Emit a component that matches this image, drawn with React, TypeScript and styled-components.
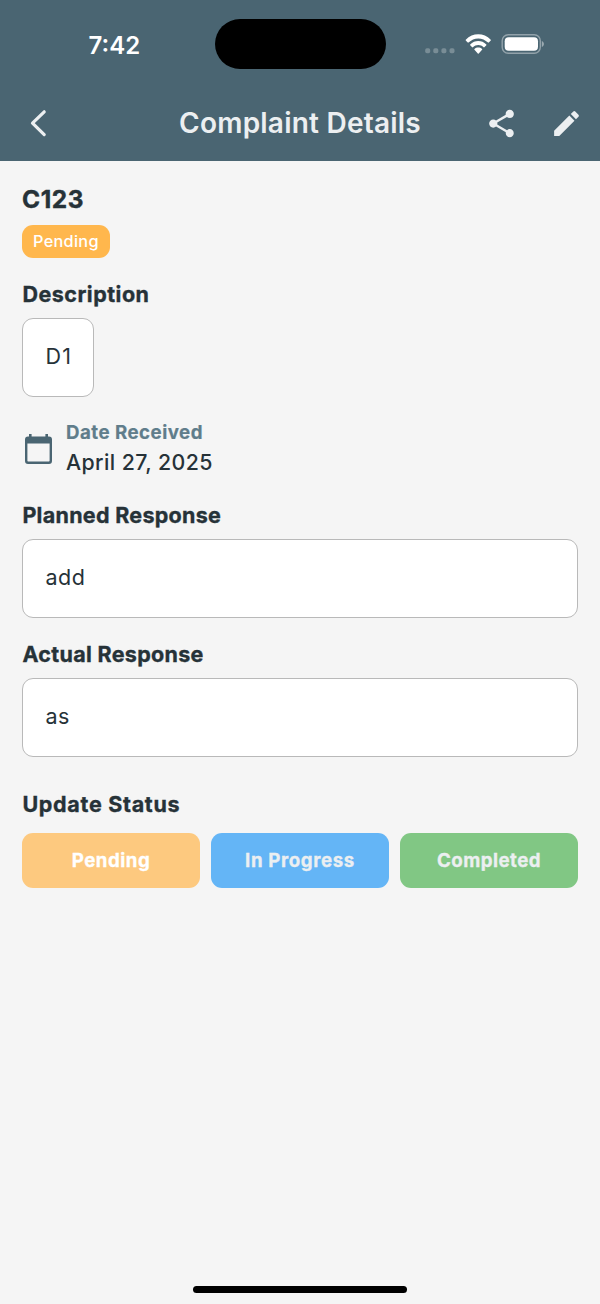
import React from "react";
import styled, { createGlobalStyle } from "styled-components";

const colors = {
  header: "#4a6572",
  onHeader: "#eceff1",
  page: "#f5f5f5",
  ink: "#263238",
  muted: "#607d8b",
  border: "#b9b9b9",
  pending: "#ffb74d",
};

const GlobalStyle = createGlobalStyle`
  * { box-sizing: border-box; }
  body {
    margin: 0;
    background: ${colors.page};
    color: ${colors.ink};
    font-family: Inter, Roboto, sans-serif;
  }
`;

const Screen = styled.div`
  height: 1304px;
  display: flex;
  flex-direction: column;
  overflow: hidden;
`;

const Header = styled.header`
  height: 161px;
  flex: none;
  background: ${colors.header};
`;

const StatusBar = styled.div`
  height: 88px;
  display: grid;
  grid-template-columns: 1fr 171px 1fr;
  align-items: center;
`;

const Clock = styled.div`
  padding-left: 88.5px;
  padding-top: 3px;
  color: #fff;
  font-size: 24px;
  font-weight: 600;
  line-height: 30px;
`;

const Island = styled.div`
  height: 50px;
  border-radius: 25px;
  background: #000;
`;

const Indicators = styled.div`
  display: flex;
  align-items: center;
  padding-left: 39.5px;
`;

const NavBar = styled.div`
  height: 70px;
  display: grid;
  grid-template-columns: 160px 1fr 160px;
  align-items: center;
`;

const Title = styled.h1`
  margin: 0;
  text-align: center;
  white-space: nowrap;
  color: ${colors.onHeader};
  font-size: 28px;
  font-weight: 600;
  letter-spacing: 0.22px;
  line-height: 36px;
`;

const IconButton = styled.button`
  display: flex;
  padding: 0;
  border: 0;
  background: none;
  color: ${colors.onHeader};
`;

const BackButton = styled(IconButton)`
  padding-left: 29px;
`;

const Actions = styled.div`
  display: flex;
  justify-content: flex-end;
  gap: 32px;
  padding-right: 17px;
`;

const Content = styled.main`
  flex: 1;
  display: flex;
  flex-direction: column;
  align-items: flex-start;
  padding: 23px 22px 0;
`;

const Text = styled.div<{ $track?: number }>`
  letter-spacing: ${(p) => p.$track ?? 0}px;
  white-space: nowrap;
`;

const ComplaintId = styled(Text)`
  font-size: 24.4px;
  font-weight: 700;
  line-height: 30px;
  -webkit-text-stroke: 0.4px currentColor;
`;

const Badge = styled(Text)`
  height: 33px;
  margin: 11px 0 22px;
  padding: 0 11px;
  border-radius: 11px;
  background: ${colors.pending};
  color: #fff;
  font-size: 16.3px;
  font-weight: 500;
  line-height: 33px;
`;

const Label = styled(Text)`
  padding-left: 0.4px;
  font-size: 21.5px;
  font-weight: 700;
  line-height: 28px;
  -webkit-text-stroke: 0.35px currentColor;
`;

const Field = styled(Text)<{ $fit?: boolean }>`
  width: ${(p) => (p.$fit ? "72px" : "100%")};
  height: 79px;
  margin-top: 10px;
  padding-left: 22.5px;
  border: 1px solid ${colors.border};
  border-radius: 11px;
  background: #fff;
  font-size: 21.5px;
  line-height: 75px;
`;

const DateRow = styled.div`
  display: flex;
  align-items: center;
  gap: 14px;
  margin: 22px 0 24px;
  padding-left: 3px;
`;

const DateLabel = styled(Text)`
  color: ${colors.muted};
  font-size: 18.7px;
  font-weight: 700;
  line-height: 28px;
  -webkit-text-stroke: 0.2px currentColor;
`;

const DateValue = styled(Text)`
  font-size: 21.3px;
  font-weight: 500;
  line-height: 30px;
`;

const Section = styled.section<{ $before?: number }>`
  width: 100%;
  margin-top: ${(p) => p.$before ?? 0}px;
`;

const StatusButtons = styled.div`
  display: grid;
  grid-template-columns: repeat(3, 1fr);
  gap: 11px;
  margin-top: 15px;
`;

const StatusButton = styled.button<{ $bg: string; $fg: string; $track: number }>`
  height: 55px;
  padding: 1px 0 0;
  border: 0;
  border-radius: 11px;
  background: ${(p) => p.$bg};
  color: ${(p) => p.$fg};
  font: 700 18.7px/54px Inter, Roboto, sans-serif;
  letter-spacing: ${(p) => p.$track}px;
  -webkit-text-stroke: 0.3px currentColor;
`;

const HomeIndicator = styled.div`
  width: 214px;
  height: 7px;
  flex: none;
  align-self: center;
  margin-bottom: 11px;
  border-radius: 4px;
  background: #000;
`;

const CalendarSlot = styled.div`
  display: flex;
  padding-top: 1px;
`;

const StatusIcons = () => (
  <svg width="120" height="24" viewBox="0 0 120 24" fill="#fff">
    <g opacity="0.26">
      <rect x="0.2" y="16.2" width="5" height="5" rx="1.7" />
      <rect x="8.3" y="16.2" width="5" height="5" rx="1.7" />
      <rect x="16.4" y="16.2" width="5" height="5" rx="1.7" />
      <rect x="24.5" y="16.2" width="5" height="5" rx="1.7" />
    </g>
    <g transform="translate(40.3 2.2) scale(1.525 1.62)">
      <path d="M8.5 2.6c2.4 0 4.6.9 6.4 2.6.1.1.3.1.5 0l1.3-1.3c.1-.1.1-.4 0-.5C12.1-1 4.9-1 .3 3.4c-.1.1-.1.4 0 .5l1.3 1.3c.1.1.3.1.5 0C3.9 3.5 6.1 2.6 8.5 2.6z" />
      <path d="M8.5 6.7c1.3 0 2.6.5 3.5 1.4.1.1.4.1.5 0l1.3-1.3c.1-.2.1-.4 0-.5-3-2.8-7.6-2.8-10.6 0-.1.1-.1.3 0 .5l1.3 1.3c.1.1.4.1.5 0 1-.9 2.2-1.4 3.5-1.4z" />
      <path d="M11 9.6c.2-.1.2-.4 0-.5-1.4-1.2-3.6-1.2-5 0-.2.1-.2.4 0 .5l2.2 2.3c.2.2.4.2.6 0z" />
    </g>
    <rect x="77.2" y="2.7" width="38.1" height="18.6" rx="6" fill="none" stroke="#fff" strokeOpacity="0.4" strokeWidth="1.4" />
    <rect x="79.7" y="5.2" width="33.3" height="13.6" rx="4" />
    <path d="M116.8 9v6c1.3-.5 2.1-1.7 2.1-3s-.8-2.5-2.1-3z" opacity="0.45" />
  </svg>
);

const ChevronIcon = () => (
  <svg width="18" height="28" viewBox="0 0 18 28" fill="none" stroke="currentColor" strokeWidth="3.2" strokeLinecap="round" strokeLinejoin="round">
    <path d="M15.2 2.8L3.5 14.2l11.7 11.4" />
  </svg>
);

const ShareIcon = () => (
  <svg width="33" height="33" viewBox="0 0 24 24" fill="currentColor">
    <path d="M18 16.08c-.76 0-1.44.3-1.96.77L8.91 12.7c.05-.23.09-.46.09-.7s-.04-.47-.09-.7l7.05-4.11c.54.5 1.25.81 2.04.81 1.66 0 3-1.34 3-3s-1.34-3-3-3-3 1.34-3 3c0 .24.04.47.09.7L8.04 9.81C7.5 9.31 6.79 9 6 9c-1.66 0-3 1.34-3 3s1.34 3 3 3c.79 0 1.5-.31 2.04-.81l7.12 4.16c-.05.21-.08.43-.08.65 0 1.61 1.31 2.92 2.92 2.92s2.92-1.31 2.92-2.92-1.31-2.92-2.92-2.92z" />
  </svg>
);

const EditIcon = () => (
  <svg width="33" height="33" viewBox="0 0 24 24" fill="currentColor">
    <path d="M3 17.25V21h3.75L17.81 9.94l-3.75-3.75L3 17.25zM20.71 7.04c.39-.39.39-1.02 0-1.41l-2.34-2.34a.9959.9959 0 0 0-1.41 0l-1.83 1.83 3.75 3.75 1.83-1.83z" />
  </svg>
);

const CalendarIcon = () => (
  <svg width="27" height="30" viewBox="0 0 27 30" fill={colors.header}>
    <path
      fillRule="evenodd"
      d="M4 0h2.6v2.5h13.8V0H23v2.5h1a3 3 0 0 1 3 3V27a3 3 0 0 1-3 3H3a3 3 0 0 1-3-3V5.5a3 3 0 0 1 3-3h1zM2.400 9.500v17c0 .6.4 1 1 1h20.200c.6 0 1-.4 1-1v-17z"
    />
  </svg>
);

export default function App() {
  return (
    <>
      <GlobalStyle />
      <Screen>
        <Header>
          <StatusBar>
            <Clock>7:42</Clock>
            <Island />
            <Indicators>
              <StatusIcons />
            </Indicators>
          </StatusBar>
          <NavBar>
            <BackButton aria-label="Back">
              <ChevronIcon />
            </BackButton>
            <Title>Complaint Details</Title>
            <Actions>
              <IconButton aria-label="Share">
                <ShareIcon />
              </IconButton>
              <IconButton aria-label="Edit">
                <EditIcon />
              </IconButton>
            </Actions>
          </NavBar>
        </Header>
        <Content>
          <ComplaintId $track={0.6}>C123</ComplaintId>
          <Badge $track={0.3}>Pending</Badge>
          <Label $track={0.5}>Description</Label>
          <Field $fit $track={1.2}>D1</Field>
          <DateRow>
            <CalendarSlot>
              <CalendarIcon />
            </CalendarSlot>
            <div>
              <DateLabel $track={0.48}>Date Received</DateLabel>
              <DateValue $track={0.42}>April 27, 2025</DateValue>
            </div>
          </DateRow>
          <Section>
            <Label $track={0.29}>Planned Response</Label>
            <Field $track={0.5}>add</Field>
          </Section>
          <Section $before={22}>
            <Label $track={0.32}>Actual Response</Label>
            <Field $track={0.4}>as</Field>
          </Section>
          <Section $before={33}>
            <Label $track={0.7}>Update Status</Label>
            <StatusButtons>
              <StatusButton $bg="#fdc97f" $fg="#ffffff" $track={0.5}>Pending</StatusButton>
              <StatusButton $bg="#64b5f6" $fg="#eceff1" $track={0.62}>In Progress</StatusButton>
              <StatusButton $bg="#81c784" $fg="#eceff1" $track={0.45}>Completed</StatusButton>
            </StatusButtons>
          </Section>
        </Content>
        <HomeIndicator />
      </Screen>
    </>
  );
}
